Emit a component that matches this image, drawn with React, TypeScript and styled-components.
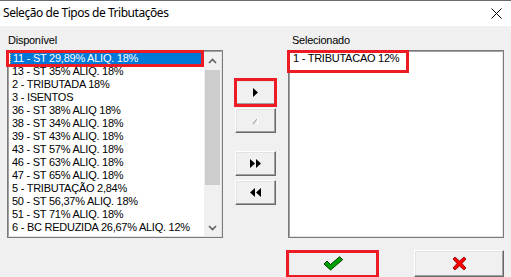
import * as React from "react";
import styled, { createGlobalStyle } from "styled-components";

const GlobalStyle = createGlobalStyle`
  html, body {
    margin: 0;
    padding: 0;
    background: #f0f0f0;
  }
  * {
    box-sizing: border-box;
  }
`;

const Window = styled.div`
  width: 511px;
  height: 277px;
  overflow: hidden;
  background: #f0f0f0;
  font-family: "Liberation Sans", Arial, sans-serif;
  font-size: 11px;
  letter-spacing: -0.25px;
  color: #000;
  display: flex;
  flex-direction: column;
`;

const TitleBar = styled.div`
  height: 26px;
  flex: none;
  background: #fff;
  border-top: 1px solid #6b6b6b;
  display: flex;
  align-items: center;
  justify-content: space-between;
  padding: 0 9px 1px 3px;
`;

const Title = styled.span`
  font-family: "Noto Sans", "Liberation Sans", sans-serif;
  font-size: 12px;
  letter-spacing: -0.45px;
  line-height: 16px;
`;

const Body = styled.div`
  display: grid;
  grid-template-columns: 216px 1fr 216px;
  grid-template-rows: 13px 188px auto;
  row-gap: 3px;
  padding: 8px 7px 0 7px;
`;

const Label = styled.div<{ $indent?: number; $col?: number }>`
  grid-column: ${(p) => p.$col ?? 1};
  line-height: 13px;
  padding-left: ${(p) => p.$indent ?? 1}px;
`;

// sunken list frame: dark outer line, bevel inside
const ListFrame = styled.div<{ $col?: number }>`
  grid-row: 2;
  grid-column: ${(p) => p.$col ?? 1};
  border: 1px solid #7a7a7a;
  background: #fff;
  position: relative;
`;

const ListInner = styled.div`
  height: 100%;
  border-style: solid;
  border-width: 1px;
  border-color: #a0a0a0 #e3e3e3 #e3e3e3 #a0a0a0;
  display: flex;
`;

const Items = styled.div`
  flex: 1;
  padding: 0 1px;
`;

const Item = styled.div<{ $selected?: boolean }>`
  height: 13px;
  line-height: 13px;
  padding-left: 2px;
  white-space: nowrap;
  background: ${(p) => (p.$selected ? "#0078d7" : "transparent")};
  color: ${(p) => (p.$selected ? "#fff" : "#000")};
  ${(p) => (p.$selected ? "border-left: 1px dotted #f0a040;" : "")}
`;

const ScrollBar = styled.div`
  width: 17px;
  flex: none;
  background: #f0f0f0;
  display: flex;
  flex-direction: column;
`;

const ScrollArrow = styled.div`
  height: 17px;
  display: flex;
  align-items: center;
  justify-content: center;
`;

const Track = styled.div`
  flex: 1;
  padding: 1px 1px 0 1px;
`;

const Thumb = styled.div`
  height: 115px;
  background: #cdcdcd;
`;

const Middle = styled.div`
  grid-row: 2;
  grid-column: 2;
  display: flex;
  flex-direction: column;
  align-items: center;
  padding-top: 30px;
`;

const Btn = styled.div<{ $w?: number; $h?: number; $gap?: number }>`
  width: ${(p) => p.$w ?? 41}px;
  height: ${(p) => p.$h ?? 25}px;
  margin-top: ${(p) => p.$gap ?? 0}px;
  background: #f0f0f0;
  border-style: solid;
  border-width: 1px;
  border-color: #fff #696969 #696969 #fff;
  box-shadow: inset -1px -1px 0 #a0a0a0, inset 1px 1px 0 #e3e3e3;
  display: flex;
  align-items: center;
  justify-content: center;
`;

const Callout = styled.div<{ $l: number; $t: number; $r: number; $b: number }>`
  position: relative;
  &::after {
    content: "";
    position: absolute;
    left: ${(p) => p.$l}px;
    top: ${(p) => p.$t}px;
    right: ${(p) => p.$r}px;
    bottom: ${(p) => p.$b}px;
    border: 3px solid #ed1c24;
    pointer-events: none;
  }
`;

const InlineCallout = styled(Callout)`
  display: inline-block;
  padding-right: 2px;
`;

const Footer = styled.div`
  grid-row: 3;
  grid-column: 3;
  display: flex;
  justify-content: space-between;
  margin-top: 9px;
`;

const available = [
  "11 - ST 29,89% ALIQ. 18%",
  "13 - ST 35% ALIQ. 18%",
  "2 - TRIBUTADA 18%",
  "3 - ISENTOS",
  "36 - ST 38% ALIQ 18%",
  "38 - ST 34% ALIQ. 18%",
  "39 - ST 43% ALIQ. 18%",
  "43 - ST 57% ALIQ. 18%",
  "46 - ST 63% ALIQ. 18%",
  "47 - ST 65% ALIQ. 18%",
  "5 - TRIBUTAÇÃO 2,84%",
  "50 - ST 56,37% ALIQ. 18%",
  "51 - ST 71% ALIQ. 18%",
  "6 - BC REDUZIDA 26,67% ALIQ. 12%",
];

const Chevron = ({ up }: { up?: boolean }) => (
  <svg width="9" height="6" viewBox="0 0 9 6">
    <path
      d={up ? "M1 5 L4.5 1.5 L8 5" : "M1 1 L4.5 4.5 L8 1"}
      fill="none"
      stroke="#606060"
      strokeWidth="1.6"
    />
  </svg>
);

const Arrow = ({ dir, double }: { dir: "r" | "l"; double?: boolean }) => {
  const one = (x: number) =>
    dir === "r" ? `M${x} 0 L${x + 5} 4.5 L${x} 9 Z` : `M${x + 5} 0 L${x} 4.5 L${x + 5} 9 Z`;
  return (
    <svg width={double ? 12 : 6} height="10" viewBox={`0 0 ${double ? 12 : 6} 10`}>
      <path d={double ? one(0) + one(6) : one(0)} fill="#000" />
    </svg>
  );
};

const DisabledArrow = () => (
  <svg width="7" height="11" viewBox="0 0 7 11">
    <path d="M1 9 L5 4" stroke="#a0a0a0" strokeWidth="1.2" fill="none" />
    <path d="M5.5 3 V10" stroke="#fff" strokeWidth="1" fill="none" />
  </svg>
);

const Check = () => (
  <svg width="21" height="15" viewBox="0 0 21 15">
    <path
      d="M1 8 L4 5 L7.5 8.5 L16.5 0.8 L19.8 3.6 L7.5 14 Z"
      fill="#00a000"
      stroke="#004000"
      strokeWidth="1"
      strokeLinejoin="round"
    />
  </svg>
);

const Cross = () => (
  <svg width="15" height="15" viewBox="0 0 15 15">
    <path
      d="M1 3 L3 1 L7.5 5 L12 1 L14 3 L10 7.5 L14 12 L12 14 L7.5 10 L3 14 L1 12 L5 7.5 Z"
      fill="#ff0000"
      stroke="#800000"
      strokeWidth="0.8"
      strokeLinejoin="round"
    />
  </svg>
);

const CloseX = () => (
  <svg width="11" height="11" viewBox="0 0 11 11">
    <path d="M0.5 0.5 L10.5 10.5 M10.5 0.5 L0.5 10.5" stroke="#000" strokeWidth="1" />
  </svg>
);

export default function App() {
  return (
    <>
      <GlobalStyle />
      <Window>
        <TitleBar>
          <Title>Seleção de Tipos de Tributações</Title>
          <CloseX />
        </TitleBar>
        <Body>
          <Label>Disponível</Label>
          <Label $col={3} $indent={4}>
            Selecionado
          </Label>

          <ListFrame>
            <ListInner>
              <Items>
                {available.map((t, i) =>
                  i === 0 ? (
                    <Callout key={t} $l={-4} $t={-2} $r={-1} $b={-2}>
                      <Item $selected>{t}</Item>
                    </Callout>
                  ) : (
                    <Item key={t}>{t}</Item>
                  )
                )}
              </Items>
              <ScrollBar>
                <ScrollArrow>
                  <Chevron up />
                </ScrollArrow>
                <Track>
                  <Thumb />
                </Track>
                <ScrollArrow>
                  <Chevron />
                </ScrollArrow>
              </ScrollBar>
            </ListInner>
          </ListFrame>

          <Middle>
            <Callout $l={-1} $t={-2} $r={-1} $b={-2}>
              <Btn>
                <Arrow dir="r" />
              </Btn>
            </Callout>
            <Btn $gap={3}>
              <DisabledArrow />
            </Btn>
            <Btn $gap={18}>
              <Arrow dir="r" double />
            </Btn>
            <Btn $gap={4}>
              <Arrow dir="l" double />
            </Btn>
          </Middle>

          <ListFrame $col={3}>
            <ListInner>
              <Items>
                <InlineCallout $l={-4} $t={-2} $r={-8} $b={-8}>
                  <Item>1 - TRIBUTACAO 12%</Item>
                </InlineCallout>
              </Items>
            </ListInner>
          </ListFrame>

          <Footer>
            <Callout $l={-2} $t={0} $r={-1} $b={-1}>
              <Btn $w={90} $h={27}>
                <Check />
              </Btn>
            </Callout>
            <Btn $w={90} $h={27}>
              <Cross />
            </Btn>
          </Footer>
        </Body>
      </Window>
    </>
  );
}
